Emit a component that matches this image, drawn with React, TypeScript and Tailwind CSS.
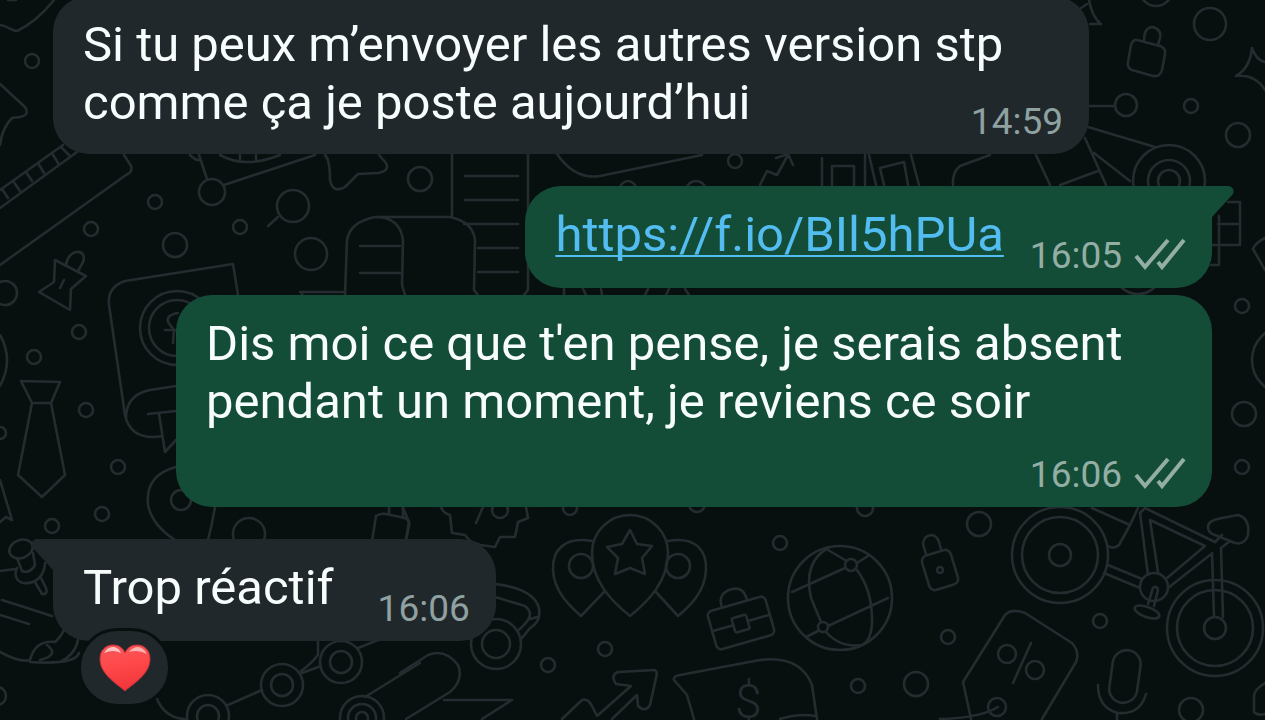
import React from "react";

type Side = "in" | "out";

interface BubbleProps {
  side: Side;
  tail?: boolean;
  className?: string;
  children: React.ReactNode;
}

const Circles: React.FC<{ items: number[][] }> = ({ items }) => (
  <>
    {items.map(([cx, cy, r], i) => (
      <circle key={i} cx={cx} cy={cy} r={r} />
    ))}
  </>
);

const dots = [
  [32, 61, 7], [155, 202, 7], [91, 229, 7], [240, 227, 7], [175, 245, 12],
  [311, 254, 16], [293, 206, 16], [212, 192, 13], [420, 179, 12], [5, 293, 12],
  [735, 161, 7], [628, 189, 8], [696, 191, 10], [1126, 105, 11], [1191, 106, 7],
  [1238, 135, 12], [1210, 24, 16], [1156, -10, 16], [1242, 306, 7],
  [1244, 414, 12], [1242, 467, 7], [1286, 360, 34], [79, 332, 7], [34, 357, 7],
  [86, 410, 7], [0, 433, 6], [118, 467, 7], [102, 514, 7], [52, 526, 7],
  [249, 534, 16], [-3, 696, 9], [570, 508, 7], [697, 504, 8], [780, 543, 7],
  [548, 665, 7], [605, 649, 7], [865, 508, 8], [979, 524, 12], [948, 637, 7],
  [858, 686, 7], [916, 684, 12], [1100, 621, 7], [1191, 710, 12],
];

// Rings, wheels and other concentric circles
const rings = [
  [177, 328, 37], [177, 328, 28], [181, 500, 10], [1169, 181, 36],
  [1169, 181, 21], [1169, 181, 11], [341, 662, 21], [341, 662, 11],
  [282, 685, 21], [282, 685, 11], [208, 716, 21], [208, 716, 11],
  [362, 718, 22], [362, 718, 14], [362, 718, 6], [496, 644, 25],
  [496, 644, 14], [581, 566, 12], [678, 566, 12], [500, 510, 8],
  [1060, 555, 48], [1060, 555, 38], [1060, 555, 11], [1215, 628, 48],
  [1215, 628, 38], [1215, 628, 11], [1154, 587, 14], [840, 598, 52],
  [823, 627, 5], [851, 565, 6], [940, 570, 3], [1007, 654, 9],
  [1035, 670, 9], [997, 707, 9], [1138, 272, 15], [1138, 270, 24],
];

const Wallpaper = () => (
  <svg
    className="absolute inset-0 h-full w-full"
    viewBox="0 0 1265 720"
    preserveAspectRatio="xMidYMid slice"
    fill="none"
    stroke="#242c30"
    strokeWidth="2.6"
    strokeLinecap="round"
    strokeLinejoin="round"
    aria-hidden="true"
  >
    <Circles items={dots} />
    <Circles items={rings} />

    {/* top left: star, ruler, box */}
    <path d="M54 0C42 15 30 25 17 31 12 31 8 26 0 25M8 0H16M0 84 25 107Q30 115 20 117L12 118Q2 128 0 145" />
    <path d="M63 145 0 190M77 152 0 208M52 153l6 10M38 163l6 10M26 172l6 9M13 181l7 10M2 189l6 9M61 147l8 8" />
    <path d="M124 155 131 166Q133 172 126 175L0 265" />
    <path d="M199 155 207 179M224 185 315 155M190 155Q196 161 200 160M220 155Q245 169 280 155M240 155v4M256 155v4" />
    <path d="M325 155Q330 160 330 180 333 194 345 187L358 174 378 173Q390 171 386 163L379 155M278 217 268 226" />

    {/* pin */}
    <path d="M55 260 86 276 71 289 70 310 39 292 54 282ZM66 265C68 248 88 248 83 262L78 271M60 288 64 280" />

    {/* papers */}
    <path d="M345 295 347 240Q350 222 375 217 400 217 403 240L402 285 405 295M375 217H450Q473 222 475 240L474 290 478 295M360 246H400M360 273H400M345 292H300M302 292v5" />
    <path d="M452 154V217M528 154V290L524 295M465 176H518M465 200H518M464 224H518M478 248H518M478 272H518" />
    <path d="M557 154Q575 180 600 176L702 155M760 185 767 171 777 175 788 155M776 158 788 154 793 165" />
    <path d="M564 289v6M583 289l3 6M601 289l1 6M648 289l-3 6M669 289l-3 6M685 289l4 6" />

    {/* frames and scooter */}
    <path d="M822 185V158M832 185V166H854V185M865 155V185M869 155 876 185M884 185 880 168 904 162 908 185M911 155 919 185M953 185Q952 172 960 166L990 155" />
    <path d="M1036 155 1050 185M1060 185 1098 171M1085 138 1106 185M1088 127 1155 147M1094 153 1130 181M1088 106H1114" />

    {/* lock and sparkles */}
    <path d="M1137 40 1160 46Q1166 48 1165 54L1162 70Q1160 77 1153 76L1132 70Q1127 68 1128 62L1131 45Q1133 39 1137 40ZM1144 41Q1144 27 1153 27 1162 30 1160 38L1158 45" />
    <path d="M1252 48Q1256 60 1265 62M1252 48Q1250 68 1236 76 1255 74 1265 90M1089 0Q1092 17 1101 24L1090 24M1081 8 1087 4" />
    <path d="M1228 202H1240V245H1212M1218 224H1240M1219 216V265H1211M1265 238Q1255 243 1253 249L1265 270" />

    {/* tie */}
    <path d="M21 381 60 382 51 403H32ZM32 403 18 475 42 497 65 475 51 403M0 335Q14 360 0 386M0 480 12 520 6 517 0 522" />

    {/* passport and map marker */}
    <path d="M238 295 233 264 125 281Q107 287 109 305L125 415Q130 438 155 437L162 436M176 386 150 390Q126 395 126 418M178 313Q166 315 168 322L174 330 173 343M165 330H176M148 414 176 411M159 414 165 452 176 440" />
    <path d="M176 467Q145 475 148 505 152 525 175 540M215 507Q212 525 208 540" />

    {/* push pin and hand */}
    <ellipse cx="21" cy="549" rx="12" ry="9" transform="rotate(-20 21 549)" />
    <path d="M17 558 22 571Q30 574 35 565L33 553M17 568C8 588 44 590 45 563M35 582 42 594Q48 595 46 588L41 578M0 571 15 569M2 600 52 616M0 615 29 624" />
    <path d="M0 652Q20 663 30 660 35 640 55 642 64 634 65 625M78 640Q75 655 60 662M30 662Q75 665 79 653M47 645Q60 655 40 660" />

    {/* chain */}
    <path d="M318 641V655Q310 665 301 671M228 705 262 690M302 673 321 666M358 648 378 640M157 699Q165 718 185 719M365 697 420 663" />
    <path d="M372 541 376 516Q380 513 386 514L405 518Q410 520 409 526L406 539M389 514V507M403 518V507" />

    {/* discount badge */}
    <path d="M441 507Q443 513 450 515L452 533 465 535 470 541 480 545 495 547 500 537 515 537 518 522 528 518 526 507M483 507 476 523M403 508 409 522 406 540" />

    {/* map pins */}
    <path d="M630 616C610 600 592 580 592 553A38 38 0 0 1 668 553C668 580 650 600 630 616Z" />
    <path d="M592 541C565 536 552 550 553 570 554 592 570 606 581 616L604 592M668 541C695 536 707 550 706 570 705 592 690 606 678 616L656 592" />
    <path d="M630 530 637 544 652 546 642 558 645 574 630 568 615 574 618 558 607 547 622 544Z" />

    {/* car and plane */}
    <path d="M495 584Q530 588 538 605 543 620 530 628L522 638M495 597 525 606Q533 612 528 620 522 628 517 631M530 619 537 617" />
    <path d="M400 673 428 655Q445 648 458 665 464 680 450 692L406 719M444 700H512L482 719" />

    {/* arrow, speech balloon */}
    <path d="M562 719 582 700Q588 698 592 706L597 716 631 686 616 684Q610 675 618 672L655 670Q658 672 656 678L650 705Q645 713 638 706L637 695 612 719" />
    <path d="M694 719 687 695 674 680Q673 676 680 675L760 660Q800 655 812 685L817 719M780 719Q800 713 815 716" />
    <text
      x="735"
      y="718"
      className="font-['Roboto'] font-light"
      fontSize="48"
      fill="#242c30"
      stroke="none"
    >
      $
    </text>

    {/* briefcase */}
    <g transform="rotate(-16 741 623)">
      <rect x="711" y="603" width="60" height="40" rx="5" />
      <path d="M711 623H733M748 623H771M727 603Q726 588 741 588 754 588 753 603" />
      <rect x="733" y="616" width="15" height="15" rx="2" />
    </g>

    {/* ball */}
    <path d="M828 548Q803 562 811 598L821 622M792 592 845 568M828 550 845 560M857 563 868 556M857 570Q872 590 872 620 872 640 862 645M828 626 888 598M806 637 818 631M826 632Q840 648 862 645" />

    {/* padlock */}
    <rect x="925" y="552" width="30" height="36" rx="6" transform="rotate(-17 940 570)" />
    <path d="M926 554 923 544Q924 535 932 535 937 536 939 542L941 549" />

    {/* price tag */}
    <path d="M1042 719 1076 662Q1080 652 1072 643L1025 613Q1012 608 1005 615L963 682 971 719M1031 643 1013 683M940 719Q980 718 998 707" />

    {/* microphone */}
    <rect x="1111" y="650" width="28" height="53" rx="14" transform="rotate(8 1125 676)" />
    <path d="M1098 685Q1098 708 1118 713 1140 715 1146 694M1117 713V720M1265 683Q1253 690 1254 698V712Q1258 716 1265 714" />

    {/* bicycle */}
    <path d="M1140 513 1148 575M1150 520 1158 572M1150 520 1205 546 1167 578M1145 508 1215 542M1140 513 1145 508M1092 508 1130 525 1119 545Q1113 550 1108 546M1130 525 1138 508M1108 565 1142 579M1104 573 1140 588" />
    <path d="M1148 604 1153 588Q1157 585 1158 590L1154 606M1168 588 1210 555M1212 553 1214 617M1221 548 1223 617M1215 542 1222 535M1221 548 1230 541" />
    <path d="M1208 527Q1208 520 1222 518L1238 515Q1250 518 1248 535 1245 545 1235 543L1215 535Q1208 533 1208 527Z" />
    <ellipse cx="1147" cy="612" rx="13" ry="5" transform="rotate(20 1147 612)" />
  </svg>
);

const DoubleCheck = () => (
  <svg
    width="52"
    height="36"
    viewBox="0 0 52 36"
    fill="none"
    stroke="currentColor"
    strokeWidth="4"
    role="img"
    aria-label="Distribué"
  >
    <path d="M2 18 11 29 34 2M24 24 28 29 50 2" />
  </svg>
);

const Meta: React.FC<{ time: string; side: Side; className?: string }> = ({
  time,
  side,
  className = "",
}) => (
  <div
    className={`flex shrink-0 items-center gap-3 text-[37px] leading-10 ${
      side === "out" ? "text-[#93aea5]" : "text-[#8fa2a1]"
    } ${className}`}
  >
    <time>{time}</time>
    {side === "out" && <DoubleCheck />}
  </div>
);

const Bubble: React.FC<BubbleProps> = ({ side, tail, className = "", children }) => {
  const out = side === "out";

  return (
    <article
      className={`relative flex rounded-[36px] pt-5 pr-[26px] pb-3 pl-[30px] text-[49px] leading-[58px] ${
        out ? "self-end bg-[#144d37]" : "self-start bg-[#21282c]"
      } ${tail ? (out ? "rounded-tr-none" : "rounded-tl-none") : ""} ${className}`}
    >
      {tail && (
        <svg
          className={`absolute top-0 ${
            out ? "left-full text-[#144d37]" : "right-full -scale-x-100 text-[#21282c]"
          }`}
          width="22"
          height="32"
          viewBox="0 0 22 32"
          fill="currentColor"
          aria-hidden="true"
        >
          <path d="M0 0H17Q23 2 21 8L0 31Z" />
        </svg>
      )}
      {children}
    </article>
  );
};

const Heart = () => (
  <svg width="52" height="48" viewBox="0 0 52 48" aria-hidden="true">
    <defs>
      <linearGradient id="heart" x1="0" y1="0" x2="0.2" y2="1">
        <stop offset="0" stopColor="#f4585a" />
        <stop offset="0.45" stopColor="#ff4a4b" />
        <stop offset="1" stopColor="#f2373c" />
      </linearGradient>
    </defs>
    <path
      d="M26 47C20 41 1 31 1 15 1 6 7 1 14 1 20 1 24 4 26 9 28 4 32 1 38 1 45 1 51 6 51 15 51 31 32 41 26 47Z"
      fill="url(#heart)"
      stroke="#c9323a"
      strokeWidth="1"
    />
    <path d="M5 9Q9 2 15 3 20 4 22 9 14 5 5 9Z" fill="#f9c3c3" />
    <path d="M30 8Q34 3 39 3 45 4 48 10 39 5 30 8Z" fill="#f9b3b3" />
  </svg>
);

const App = () => {
  return (
    <div className="relative min-h-screen overflow-hidden bg-[#07100f] font-['Roboto',sans-serif] text-[#f7fcfc]">
      <Wallpaper />
      <main className="relative flex flex-col px-[53px] pb-16">
        <Bubble side="in" className="-mt-1 w-full max-w-[1036px] flex-col">
          <p className="mb-2.5">
            Si tu peux m’envoyer les autres version stp comme ça je poste
            aujourd’hui
          </p>
          <Meta time="14:59" side="in" className="-mt-10 self-end" />
        </Bubble>

        <Bubble side="out" tail className="mt-8 items-end gap-[26px]">
          <a
            href="https://f.io/BIl5hPUa"
            className="mb-3 text-[#53bdf2] underline decoration-2 underline-offset-4 [text-decoration-skip-ink:none]"
          >
            https://f.io/BIl5hPUa
          </a>
          <Meta time="16:05" side="out" />
        </Bubble>

        <Bubble side="out" className="mt-[7px] w-full max-w-[1036px] flex-col">
          <p className="mb-6">
            Dis moi ce que t'en pense, je serais absent pendant un moment, je
            reviens ce soir
          </p>
          <Meta time="16:06" side="out" className="self-end" />
        </Bubble>

        <Bubble side="in" tail className="mt-8 items-end gap-11">
          <p className="mb-3">Trop réactif</p>
          <Meta time="16:06" side="in" />
          <button
            type="button"
            aria-label="Réaction cœur"
            className="absolute top-[89px] left-[25px] flex h-[79px] w-[93px] items-center justify-center rounded-full border-3 border-[#07100f] bg-[#21282c]"
          >
            <Heart />
          </button>
        </Bubble>
      </main>
    </div>
  );
};

export default App;
